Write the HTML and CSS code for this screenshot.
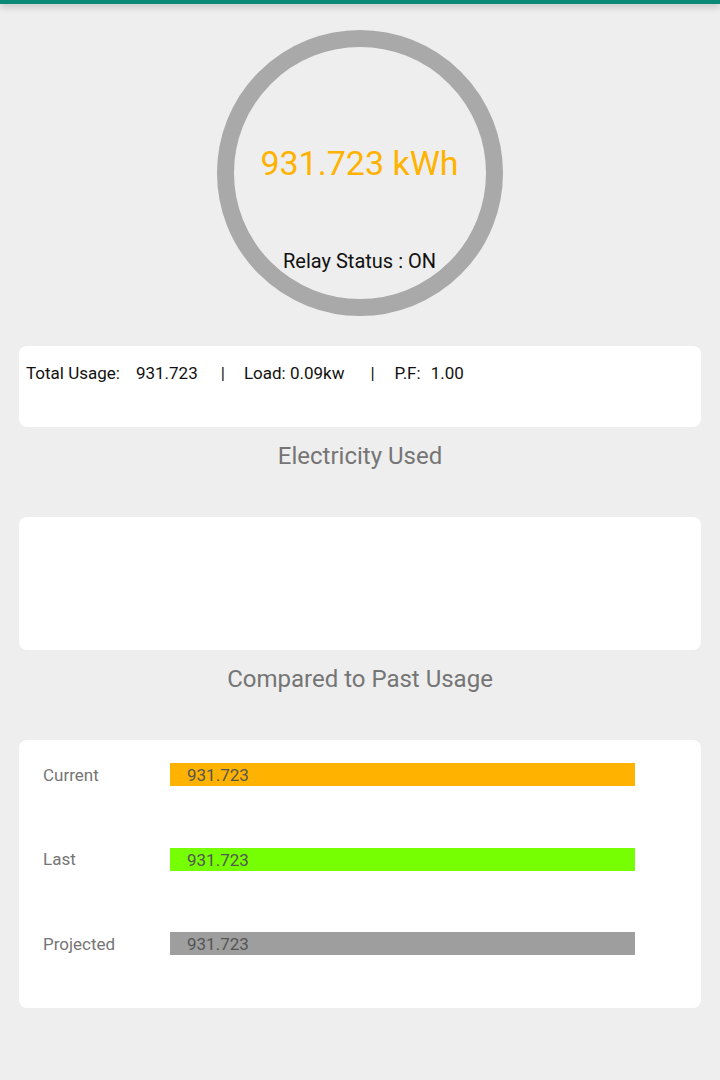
FILE: index.html
```html
<!DOCTYPE html>
<html>
<head>
<meta charset="utf-8">
<link rel="stylesheet" href="styles.css">
</head>
<body>
<div class="topbar"></div>
<div class="page">
  <div class="gauge">
    <div class="ring">
      <div class="value">931.723 kWh</div>
      <div class="relay">Relay Status : ON</div>
    </div>
  </div>
  <div class="card summary">
    <span class="s1">Total Usage:</span><span class="s2">931.723</span><span class="sep1">|</span><span class="s3">Load: 0.09kw</span><span class="sep2">|</span><span class="s4">P.F:</span><span class="s5">1.00</span>
  </div>
  <div class="title">Electricity Used</div>
  <div class="card chart"></div>
  <div class="title">Compared to Past Usage</div>
  <div class="card compare">
    <div class="row"><div class="label">Current</div><div class="bar current">931.723</div></div>
    <div class="row"><div class="label">Last</div><div class="bar last">931.723</div></div>
    <div class="row"><div class="label">Projected</div><div class="bar projected">931.723</div></div>
  </div>
</div>
</body>
</html>
```
FILE: styles.css
```css
html, body {
  margin: 0;
  padding: 0;
  background: #eeeeee;
  font-family: Roboto, "Noto Sans", sans-serif;
  height: 1080px;
}
.topbar {
  height: 4px;
  background: #0a8a76;
  box-shadow: 0 2px 7px rgba(0,0,0,0.28);
}
.page {
  display: flex;
  flex-direction: column;
}
.gauge {
  display: flex;
  justify-content: center;
  margin-top: 26px;
  padding-right: 1px;
}
.ring {
  width: 252px;
  height: 252px;
  border: 17px solid #a9a9a9;
  border-radius: 50%;
  display: flex;
  flex-direction: column;
  align-items: center;
}
.value {
  margin-top: 96px;
  font-size: 34px;
  line-height: 40px;
  color: #ffb300;
}
.relay {
  margin-top: 66px;
  font-size: 20px;
  line-height: 24px;
  color: #111;
}
.card {
  background: #ffffff;
  margin: 0 19px;
  border-radius: 8px;
}
.summary {
  margin-top: 30px;
  height: 81px;
  box-sizing: border-box;
  padding: 17px 0 0 7px;
  font-size: 17px;
  line-height: 20px;
  color: #111;
  display: flex;
  align-items: flex-start;
}
.s2 { margin-left: 16px; }
.sep1 { margin-left: 23px; }
.s3 { margin-left: 19px; }
.sep2 { margin-left: 26px; }
.s4 { margin-left: 20px; }
.s5 { margin-left: 10px; }
.title {
  margin-top: 14px;
  margin-bottom: 46px;
  text-align: center;
  font-size: 24px;
  line-height: 30px;
  color: #757575;
}
.chart {
  height: 133px;
}
.compare {
  height: 268px;
  box-sizing: border-box;
  padding: 23px 0 0 24px;
  display: flex;
  flex-direction: column;
  gap: 61.5px;
}
.row {
  display: flex;
  align-items: center;
  height: 23px;
}
.label {
  width: 127px;
  font-size: 17px;
  color: #757575;
}
.bar {
  width: 465px;
  height: 23px;
  box-sizing: border-box;
  padding-left: 17px;
  font-size: 17px;
  line-height: 24px;
  color: #555555;
}
.current { background: #ffb300; }
.last { background: #76ff03; }
.projected { background: #9e9e9e; }
```
